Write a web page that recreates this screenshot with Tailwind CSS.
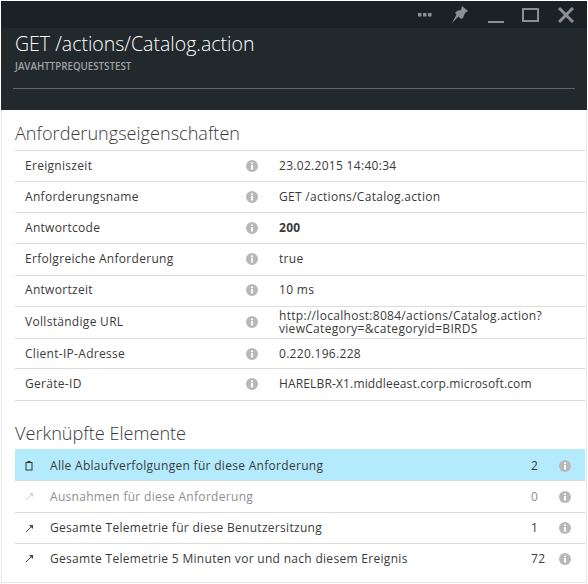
<!DOCTYPE html>
<html><head><meta charset="utf-8"><script src="https://cdn.jsdelivr.net/npm/@tailwindcss/browser@4"></script></head>
<body class="w-[588px] h-[584px] overflow-hidden bg-white font-['Open_Sans',sans-serif] text-[#3a3a3a]">
<div class="ml-[1px] mt-[1px] w-[586px]">
<header class="h-[109px] bg-[#22292d] flex flex-col text-white">
 <div class="h-[27px] bg-[#1b2125] flex items-center justify-end pr-[13px]">
  <svg width="14" height="4" viewBox="0 0 14 4" fill="#8c8f91"><rect width="3.500" height="3.500"/><rect x="5" width="3.500" height="3.500"/><rect x="10" width="3.500" height="3.500"/></svg>
  <svg class="ml-[20px]" width="16" height="18" viewBox="0 0 16 18" fill="#8c8f91"><path d="M10 0L16 5L13 7L11 12L9 13L6.500 10.500L0 17L4.500 8.500L3 7L5 5L9 4Z"/></svg>
  <div class="ml-[20px] w-[16px] h-[2px] bg-[#8c8f91] mt-[14px]"></div>
  <div class="ml-[18px] w-[17px] h-[14px] border-2 border-[#8c8f91]"></div>
  <svg class="ml-[19px]" width="16" height="16" viewBox="0 0 16 16" stroke="#8c8f91" stroke-width="3"><path d="M1 1l14 14M15 1L1 15"/></svg>
 </div>
 <div class="px-[14px] pt-[3px]">
  <h1 class="text-[19.500px] leading-[26px] font-light">GET /actions/Catalog.action</h1>
  <p class="text-[9.750px] leading-[12px] mt-[4px] text-[#9ea2a4] font-semibold">JAVAHTTPREQUESTSTEST</p>
  <div class="h-px bg-[#5f6467] mt-[15px] ml-[-2px] w-[562px]"></div>
 </div>
</header>
<main class="pl-[13px] pr-[1px] pt-[11px] h-[473px] border-l border-r border-b border-[#e6e6e6]">
 <h2 class="text-[18.100px] leading-[24px] mb-[5px] font-light">Anforderungseigenschaften</h2>
 <div class="text-[12px] tracking-[0.3px] border-t border-[#dcdcdc]">
  <div class="flex items-center h-[31px] border-b border-[#dcdcdc] pl-[10px]"><span class="w-[221px]">Ereigniszeit</span><span class="w-[33px]"><svg width="12" height="12" viewBox="0 0 12 12"><circle cx="6" cy="6" r="6" fill="#b8b8b8"/><rect x="5" y="5" width="2" height="4.500" fill="#fff"/><rect x="5" y="2.500" width="2" height="1.600" fill="#fff"/></svg></span><span>23.02.2015 14:40:34</span></div>
  <div class="flex items-center h-[31px] border-b border-[#dcdcdc] pl-[10px]"><span class="w-[221px]">Anforderungsname</span><span class="w-[33px]"><svg width="12" height="12" viewBox="0 0 12 12"><circle cx="6" cy="6" r="6" fill="#b8b8b8"/><rect x="5" y="5" width="2" height="4.500" fill="#fff"/><rect x="5" y="2.500" width="2" height="1.600" fill="#fff"/></svg></span><span>GET /actions/Catalog.action</span></div>
  <div class="flex items-center h-[31px] border-b border-[#dcdcdc] pl-[10px]"><span class="w-[221px]">Antwortcode</span><span class="w-[33px]"><svg width="12" height="12" viewBox="0 0 12 12"><circle cx="6" cy="6" r="6" fill="#b8b8b8"/><rect x="5" y="5" width="2" height="4.500" fill="#fff"/><rect x="5" y="2.500" width="2" height="1.600" fill="#fff"/></svg></span><span class="font-bold">200</span></div>
  <div class="flex items-center h-[32px] border-b border-[#dcdcdc] pl-[10px] pb-[2px]"><span class="w-[221px]">Erfolgreiche Anforderung</span><span class="w-[33px]"><svg width="12" height="12" viewBox="0 0 12 12"><circle cx="6" cy="6" r="6" fill="#b8b8b8"/><rect x="5" y="5" width="2" height="4.500" fill="#fff"/><rect x="5" y="2.500" width="2" height="1.600" fill="#fff"/></svg></span><span>true</span></div>
  <div class="flex items-center h-[31px] border-b border-[#dcdcdc] pl-[10px] pb-[2px]"><span class="w-[221px]">Antwortzeit</span><span class="w-[33px]"><svg width="12" height="12" viewBox="0 0 12 12"><circle cx="6" cy="6" r="6" fill="#b8b8b8"/><rect x="5" y="5" width="2" height="4.500" fill="#fff"/><rect x="5" y="2.500" width="2" height="1.600" fill="#fff"/></svg></span><span>10 ms</span></div>
  <div class="flex items-center h-[32px] border-b border-[#dcdcdc] pl-[10px] pb-[2px]"><span class="w-[221px]">Vollständige URL</span><span class="w-[33px]"><svg width="12" height="12" viewBox="0 0 12 12"><circle cx="6" cy="6" r="6" fill="#b8b8b8"/><rect x="5" y="5" width="2" height="4.500" fill="#fff"/><rect x="5" y="2.500" width="2" height="1.600" fill="#fff"/></svg></span><span class="leading-[13px]">http://localhost:8084/actions/Catalog.action?<br>viewCategory=&amp;categoryid=BIRDS</span></div>
  <div class="flex items-center h-[30px] border-b border-[#dcdcdc] pl-[10px]"><span class="w-[221px]">Client-IP-Adresse</span><span class="w-[33px]"><svg width="12" height="12" viewBox="0 0 12 12"><circle cx="6" cy="6" r="6" fill="#b8b8b8"/><rect x="5" y="5" width="2" height="4.500" fill="#fff"/><rect x="5" y="2.500" width="2" height="1.600" fill="#fff"/></svg></span><span>0.220.196.228</span></div>
  <div class="flex items-center h-[32px] border-b border-[#dcdcdc] pl-[10px] pb-[2px]"><span class="w-[221px]">Geräte-ID</span><span class="w-[33px]"><svg width="12" height="12" viewBox="0 0 12 12"><circle cx="6" cy="6" r="6" fill="#b8b8b8"/><rect x="5" y="5" width="2" height="4.500" fill="#fff"/><rect x="5" y="2.500" width="2" height="1.600" fill="#fff"/></svg></span><span class="tracking-[0.15px]">HARELBR-X1.middleeast.corp.microsoft.com</span></div>
 </div>
 <h2 class="text-[18.100px] leading-[24px] mt-[20px] mb-[4px] font-light">Verknüpfte Elemente</h2>
 <div class="text-[12px] tracking-[0.3px]">
  <div class="flex items-center h-[32px] bg-[#b3ebfd] border-b border-[#dcdcdc] pl-[10px] pr-[14px] pt-[2px]"><span class="w-[25px]"><svg width="8" height="10" viewBox="0 0 8 10" fill="none" stroke="#333"><rect x="1" y="1.500" width="6" height="7.500"/><path d="M2.500.5h3"/></svg></span><span class="flex-1">Alle Ablaufverfolgungen für diese Anforderung</span><span class="w-[28px]">2</span><svg width="12" height="12" viewBox="0 0 12 12"><circle cx="6" cy="6" r="6" fill="#b8b8b8"/><rect x="5" y="5" width="2" height="4.500" fill="#fff"/><rect x="5" y="2.500" width="2" height="1.600" fill="#fff"/></svg></div>
  <div class="flex items-center h-[32px] border-b border-[#dcdcdc] pl-[10px] pr-[14px] text-[#8e8e8e]"><span class="w-[25px]"><svg width="9" height="9" viewBox="0 0 9 9" fill="none" stroke="#cfcfcf"><path d="M1 8l6-6"/><path d="M4 1h4v4z" fill="#cfcfcf" stroke="none"/></svg></span><span class="flex-1">Ausnahmen für diese Anforderung</span><span class="w-[28px]">0</span><svg width="12" height="12" viewBox="0 0 12 12"><circle cx="6" cy="6" r="6" fill="#b8b8b8"/><rect x="5" y="5" width="2" height="4.500" fill="#fff"/><rect x="5" y="2.500" width="2" height="1.600" fill="#fff"/></svg></div>
  <div class="flex items-center h-[31px] border-b border-[#dcdcdc] pl-[10px] pr-[14px]"><span class="w-[25px]"><svg width="9" height="9" viewBox="0 0 9 9" fill="none" stroke="#444"><path d="M1 8l6-6"/><path d="M4 1h4v4z" fill="#444" stroke="none"/></svg></span><span class="flex-1">Gesamte Telemetrie für diese Benutzersitzung</span><span class="w-[28px]">1</span><svg width="12" height="12" viewBox="0 0 12 12"><circle cx="6" cy="6" r="6" fill="#b8b8b8"/><rect x="5" y="5" width="2" height="4.500" fill="#fff"/><rect x="5" y="2.500" width="2" height="1.600" fill="#fff"/></svg></div>
  <div class="flex items-center h-[31px] pl-[10px] pr-[14px] pb-[2px]"><span class="w-[25px]"><svg width="9" height="9" viewBox="0 0 9 9" fill="none" stroke="#444"><path d="M1 8l6-6"/><path d="M4 1h4v4z" fill="#444" stroke="none"/></svg></span><span class="flex-1">Gesamte Telemetrie 5 Minuten vor und nach diesem Ereignis</span><span class="w-[28px]">72</span><svg width="12" height="12" viewBox="0 0 12 12"><circle cx="6" cy="6" r="6" fill="#b8b8b8"/><rect x="5" y="5" width="2" height="4.500" fill="#fff"/><rect x="5" y="2.500" width="2" height="1.600" fill="#fff"/></svg></div>
 </div>
</main>
</div>
</body></html>
